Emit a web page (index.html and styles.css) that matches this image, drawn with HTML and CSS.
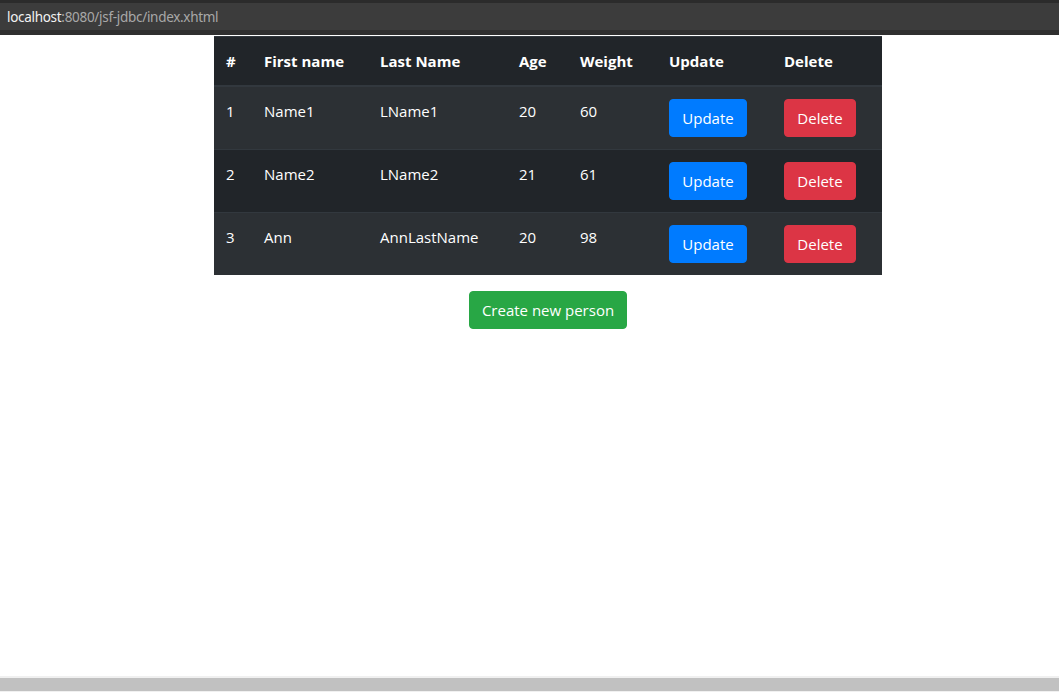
FILE: index.html
```html
<!DOCTYPE html>
<html>
<head>
<meta charset="utf-8">
<link rel="stylesheet" href="styles.css">
</head>
<body>
<div class="app">
  <div class="urlbar"><span class="host">localhost</span><span class="path">:8080/jsf-jdbc/index.xhtml</span></div>
  <div class="content">
    <div class="wrap">
      <table class="people">
        <colgroup>
          <col class="c1"><col class="c2"><col class="c3"><col class="c4"><col class="c5"><col class="c6"><col class="c7">
        </colgroup>
        <thead>
          <tr><th>#</th><th>First name</th><th>Last Name</th><th>Age</th><th>Weight</th><th>Update</th><th>Delete</th></tr>
        </thead>
        <tbody>
          <tr class="odd"><td>1</td><td>Name1</td><td>LName1</td><td>20</td><td>60</td><td><button class="btn blue">Update</button></td><td><button class="btn red">Delete</button></td></tr>
          <tr><td>2</td><td>Name2</td><td>LName2</td><td>21</td><td>61</td><td><button class="btn blue">Update</button></td><td><button class="btn red">Delete</button></td></tr>
          <tr class="odd"><td>3</td><td>Ann</td><td>AnnLastName</td><td>20</td><td>98</td><td><button class="btn blue">Update</button></td><td><button class="btn red">Delete</button></td></tr>
        </tbody>
      </table>
      <div class="actions"><button class="btn green">Create new person</button></div>
    </div>
  </div>
  <div class="hscroll"><div class="thumb"></div></div>
</div>
</body>
</html>
```

FILE: styles.css
```css
html, body {
  margin: 0;
  padding: 0;
  background: #ffffff;
}
.app {
  display: flex;
  flex-direction: column;
  height: 100vh;
  font-family: "Open Sans", "Noto Sans", sans-serif;
}
.urlbar {
  height: 27px;
  border-top: 3px solid #2b2b2b;
  border-bottom: 5px solid #2f2f2f;
  background: #3c3c3c;
  display: flex;
  align-items: center;
  padding-left: 7px;
  font-family: "Noto Sans", "Open Sans", sans-serif;
  font-size: 13.5px;
  letter-spacing: -0.3px;
}
.host { color: #f2f2f2; }
.path { color: #a8a8a8; }
.content {
  flex: 1;
  overflow: hidden;
}
.wrap {
  width: 668px;
  margin-left: 214px;
  padding-top: 1px;
}
.people {
  width: 668px;
  border-collapse: collapse;
  table-layout: fixed;
  background: #212529;
  color: #ffffff;
  font-size: 15px;
}
.c1 { width: 38px; }
.c2 { width: 116px; }
.c3 { width: 139px; }
.c4 { width: 61px; }
.c5 { width: 89px; }
.c6 { width: 115px; }
.c7 { width: 110px; }
.people th, .people td {
  padding: 12px;
  line-height: 24px;
  text-align: left;
  vertical-align: top;
  white-space: nowrap;
}
.people th {
  font-weight: 700;
  border-bottom: 2px solid #32383e;
  border-top: 1px solid #32383e;
}
.people td {
  border-top: 1px solid #32383e;
}
.people tbody tr:first-child td { border-top: none; }
.people tr.odd { background: #2c3034; }
.btn {
  box-sizing: border-box;
  font-family: "Open Sans", "Noto Sans", sans-serif;
  font-size: 15px;
  line-height: 24px;
  padding: 6px 0;
  border: 1px solid transparent;
  border-radius: 4px;
  color: #ffffff;
  cursor: pointer;
  display: inline-block;
  white-space: nowrap;
  text-align: center;
}
.blue { background: #007bff; border-color: #007bff; width: 78px; }
.red { background: #dc3545; border-color: #dc3545; width: 72px; }
.green { background: #28a745; border-color: #28a745; width: 158px; }
.actions {
  display: flex;
  justify-content: center;
  padding-top: 16px;
}
.hscroll {
  height: 16px;
  background: #f0f0f0;
  display: flex;
  align-items: center;
}
.thumb {
  height: 13px;
  width: 100%;
  background: #c1c1c1;
}
```
